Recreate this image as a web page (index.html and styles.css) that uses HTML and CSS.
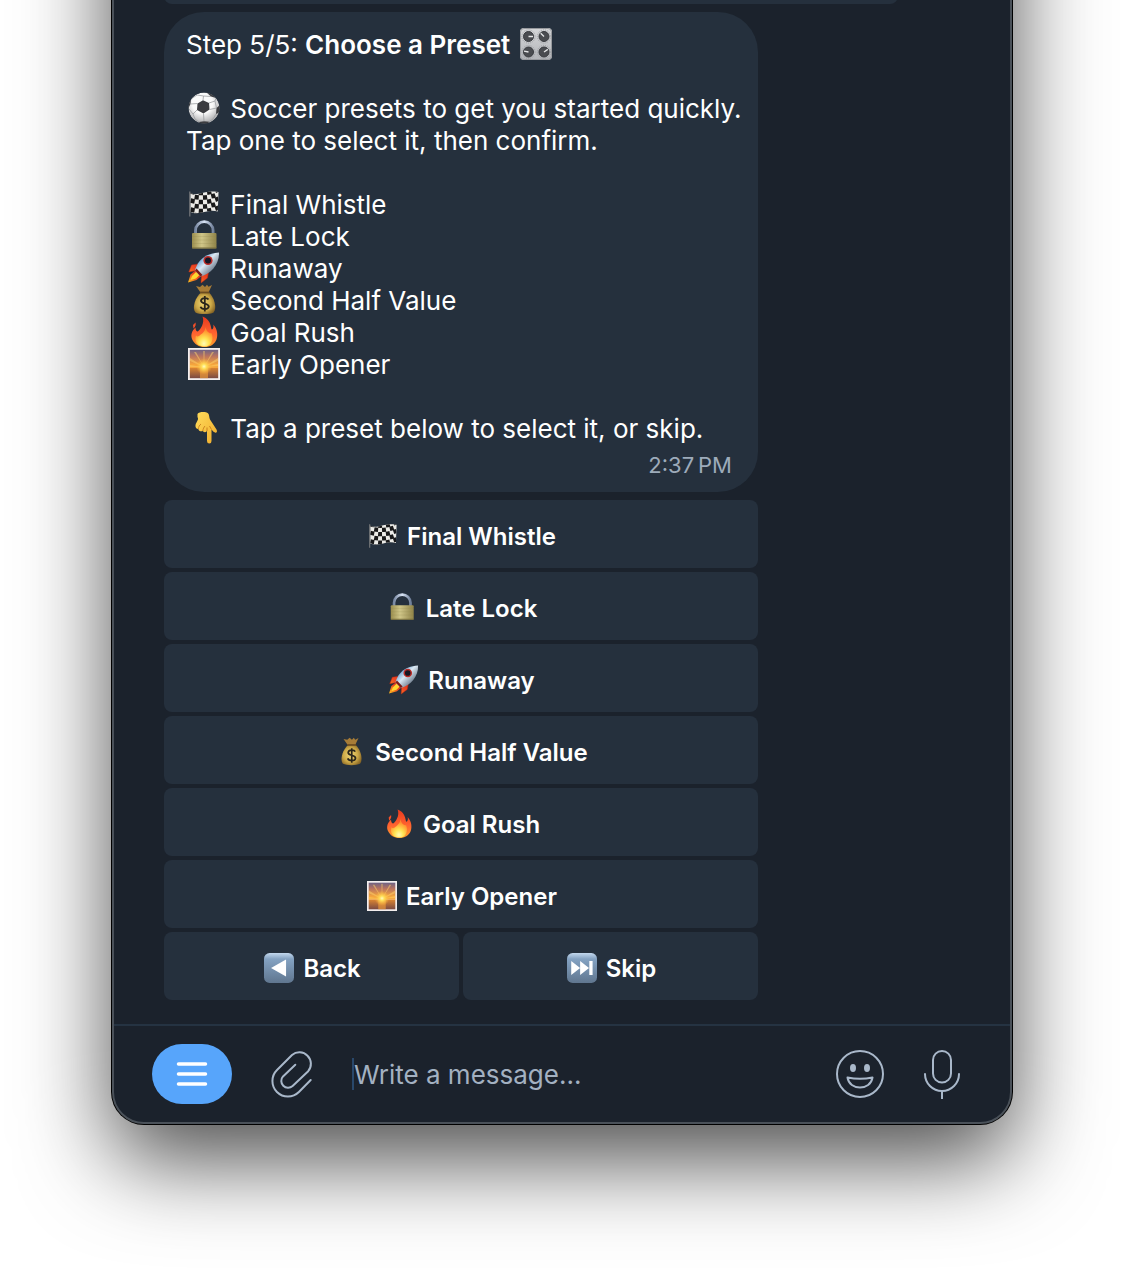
FILE: index.html
```html
<!DOCTYPE html>
<html lang="en">
<head>
    <meta charset="UTF-8">
    <meta name="viewport" content="width=device-width, initial-scale=1.0">
    <title>Choose a Preset</title>
    <link rel="stylesheet" href="styles.css">
</head>
<body>
    <main class="window">
        <div class="chat">
            <div class="previous"></div>

            <article class="bubble">
                <p>Step 5/5: <strong>Choose a Preset</strong> <svg class="emoji"><use href="#knobs"/></svg></p>
                <p><svg class="emoji"><use href="#soccer"/></svg> Soccer presets to get you started quickly.<br>Tap one to select it, then confirm.</p>
                <ul class="presets">
                    <li><svg class="emoji"><use href="#flag"/></svg> Final Whistle</li>
                    <li><svg class="emoji"><use href="#lock"/></svg> Late Lock</li>
                    <li><svg class="emoji"><use href="#rocket"/></svg> Runaway</li>
                    <li><svg class="emoji"><use href="#money"/></svg> Second Half Value</li>
                    <li><svg class="emoji"><use href="#fire"/></svg> Goal Rush</li>
                    <li><svg class="emoji"><use href="#sunrise"/></svg> Early Opener</li>
                </ul>
                <p><svg class="emoji"><use href="#point"/></svg> Tap a preset below to select it, or skip.</p>
                <time class="time">2:37&#8239;PM</time>
            </article>

            <div class="keyboard">
                <button type="button" class="key wide"><svg class="emoji"><use href="#flag"/></svg>Final Whistle</button>
                <button type="button" class="key wide"><svg class="emoji"><use href="#lock"/></svg>Late Lock</button>
                <button type="button" class="key wide"><svg class="emoji"><use href="#rocket"/></svg>Runaway</button>
                <button type="button" class="key wide"><svg class="emoji"><use href="#money"/></svg>Second Half Value</button>
                <button type="button" class="key wide"><svg class="emoji"><use href="#fire"/></svg>Goal Rush</button>
                <button type="button" class="key wide"><svg class="emoji"><use href="#sunrise"/></svg>Early Opener</button>
                <button type="button" class="key"><svg class="emoji"><use href="#back"/></svg>Back</button>
                <button type="button" class="key"><svg class="emoji"><use href="#skip"/></svg>Skip</button>
            </div>
        </div>

        <form class="composer">
            <button type="button" class="menu" aria-label="Menu">
                <svg width="32" height="24" viewBox="0 0 32 24"><path d="M2.500 2h27M2.500 12h27M2.500 22h27" stroke="#fff" stroke-width="3.500" stroke-linecap="round"/></svg>
            </button>
            <button type="button" class="tool" aria-label="Attach file">
                <svg width="48" height="50" viewBox="0 -1 48 50"><path d="M42.700 30 30.900 42A15.500 15.500 0 0 1 9 20L24 5A11.500 11.500 0 0 1 40.200 21.200L24.600 36A6.800 6.800 0 0 1 15 26.400L27.300 14.800"/></svg>
            </button>
            <input type="text" class="message" placeholder="Write a message..." aria-label="Message">
            <button type="button" class="tool" aria-label="Emoji">
                <svg width="48" height="50" viewBox="0 -1 48 50">
                    <circle cx="24" cy="24" r="23"/>
                    <path d="M11.500 27.500Q24 30 36.500 27.500C35.500 34 30 37.500 24 37.500S12.500 34 11.500 27.500Z"/>
                    <g class="eyes"><ellipse cx="17" cy="18" rx="3" ry="4"/><ellipse cx="31" cy="18" rx="3" ry="4"/></g>
                </svg>
            </button>
            <button type="button" class="tool mic" aria-label="Record voice message">
                <svg width="48" height="50" viewBox="0 -1 48 50">
                    <rect x="15" y="1" width="18" height="31.500" rx="9"/>
                    <path d="M7 24a17 17 0 0 0 34 0M24 41v8"/>
                </svg>
            </button>
        </form>
    </main>

    <!-- emoji set -->
    <svg class="sprite" width="0" height="0" aria-hidden="true">
        <defs>
            <radialGradient id="ball-fill" cx=".45" cy=".35" r=".65"><stop offset=".5" stop-color="#fafafa"/><stop offset="1" stop-color="#a9a9ab"/></radialGradient>
            <linearGradient id="panel-fill" x2="0" y2="1"><stop stop-color="#d5d6d8"/><stop offset="1" stop-color="#b2b4b8"/></linearGradient>
            <linearGradient id="brass" x2="1"><stop stop-color="#9b8e4e"/><stop offset=".4" stop-color="#d0c688"/><stop offset="1" stop-color="#8f8348"/></linearGradient>
            <linearGradient id="steel" x2="1"><stop stop-color="#7888a3"/><stop offset=".5" stop-color="#d9e4f5"/><stop offset="1" stop-color="#71819b"/></linearGradient>
            <linearGradient id="hull" x2="1" y2="1"><stop offset=".15" stop-color="#3d87c8"/><stop offset=".45" stop-color="#dbe8f3"/><stop offset=".8" stop-color="#5f6d7e"/></linearGradient>
            <linearGradient id="jet" x1="1" x2="0" y2="1"><stop stop-color="#d31f10"/><stop offset=".5" stop-color="#ef4b23"/><stop offset="1" stop-color="#ffc21c"/></linearGradient>
            <radialGradient id="sack" cx=".45" cy=".5" r=".6"><stop stop-color="#f0d778"/><stop offset=".6" stop-color="#cda947"/><stop offset="1" stop-color="#876525"/></radialGradient>
            <linearGradient id="flame" x2="0" y2="1"><stop stop-color="#e8391d"/><stop offset=".55" stop-color="#ff6230"/><stop offset="1" stop-color="#ffa12b"/></linearGradient>
            <radialGradient id="flame-core" cx=".5" cy=".85" r=".7"><stop stop-color="#fffbb4"/><stop offset=".4" stop-color="#ffe453"/><stop offset="1" stop-color="#ff8a2b"/></radialGradient>
            <linearGradient id="sky" x2="0" y2="1"><stop stop-color="#6d6285"/><stop offset=".35" stop-color="#b9735f"/><stop offset=".8" stop-color="#f5a53c"/></linearGradient>
            <linearGradient id="sea" x2="0" y2="1"><stop stop-color="#d98432"/><stop offset="1" stop-color="#7b4a42"/></linearGradient>
            <radialGradient id="sun-glow"><stop stop-color="#fffbc0"/><stop offset=".3" stop-color="#ffe05a"/><stop offset="1" stop-color="#ffb43c" stop-opacity="0"/></radialGradient>
            <linearGradient id="skin" x2="1" y2="1"><stop stop-color="#ffdc5c"/><stop offset="1" stop-color="#f0ac2b"/></linearGradient>
            <linearGradient id="tile" x2="0" y2="1"><stop stop-color="#c3d8ee"/><stop offset=".2" stop-color="#84a2c2"/><stop offset="1" stop-color="#60768f"/></linearGradient>
        </defs>

        <symbol id="soccer" viewBox="0 0 32 32">
            <clipPath id="ball-clip"><circle cx="16" cy="16" r="15.500"/></clipPath>
            <g clip-path="url(#ball-clip)">
                <circle cx="16" cy="16" r="15.500" fill="url(#ball-fill)"/>
                <path d="M9.500 11.500 15 8.200 21 11 21.500 17.500 15.500 21.500 9 18Z" fill="#3b3c40"/>
                <path d="M18 0 24 1 28 6 23 4.500ZM0 12 3 7 2.500 12 0 17ZM32 13 28.500 16 28 22 32 20ZM11 30 16 29.200 21 29.800 20 32H12Z" fill="#3b3c40"/>
                <path d="M15 8.200 15.500 4 23 4.500M15.500 4 9 3 3 7M9.500 11.500 2.500 12M9 18 5 22 1 17M5 22 7 27 11 30M15.500 21.500 16 29.200M21.500 17.500 28.500 16M21 11 27 9 28 6M27 9 28.500 16M28 22 25 27 21 29.800" fill="none" stroke="#9c9ea1" stroke-width=".8"/>
            </g>
        </symbol>
        <symbol id="knobs" viewBox="0 0 32 32">
            <rect width="32" height="32" rx="4" fill="url(#panel-fill)"/>
            <rect x=".5" y=".5" width="31" height="31" rx="3.500" fill="none" stroke="#97999d"/>
            <g fill="none" stroke="#96989c" stroke-dasharray=".8 1.200"><circle cx="8.500" cy="8.500" r="6.600"/><circle cx="24" cy="8.500" r="6.600"/><circle cx="8.500" cy="24" r="6.600"/><circle cx="24" cy="24" r="6.600"/></g>
            <g fill="#4a4c50" stroke="#3a3c40"><circle cx="8.500" cy="8.500" r="5"/><circle cx="24" cy="8.500" r="5"/><circle cx="8.500" cy="24" r="5"/><circle cx="24" cy="24" r="5"/></g>
            <path d="M8.500 8.500h4.500M24 8.500l-3.300-3.300M8.500 24l-4.500-.8M24 24l3.800-2.600" stroke="#e6e7e8" stroke-width="1.300"/>
        </symbol>
        <symbol id="flag" viewBox="0 0 32 32">
            <path d="M1.800 3.500v25" stroke="#77797b" stroke-width="1.200"/>
            <clipPath id="flag-clip"><path d="M2.500 5C10 9 17 1.500 30.500 4L29.800 23.500C19 20.500 12 28 2.500 24Z"/></clipPath>
            <g clip-path="url(#flag-clip)">
                <path d="M2 3h29v23H2z" fill="#ecebe7"/>
                <path d="M2.500 3.500q14 4 28-2M2.500 12.500q14 4 28-2M2.500 21.500q14 4 28-2" fill="none" stroke="#19191a" stroke-width="4.500" stroke-dasharray="4.200 4.200"/>
                <path d="M2.500 8q14 4 28-2M2.500 17q14 4 28-2M2.500 26q14 4 28-2" fill="none" stroke="#19191a" stroke-width="4.500" stroke-dasharray="4.200 4.200" stroke-dashoffset="4.200"/>
            </g>
        </symbol>
        <symbol id="lock" viewBox="0 0 32 32">
            <path d="M7.500 15V10.500a8.800 8.800 0 0 1 17.600 0V15" fill="none" stroke="url(#steel)" stroke-width="2.800"/>
            <rect x="4" y="13" width="24.500" height="15.500" rx="1" fill="url(#brass)"/>
            <path d="M4 16.500h24.500M4 20h24.500M4 23.500h24.500" stroke="#8d824c" stroke-opacity=".2"/>
            <path d="M4 28h24.500" stroke="#756b3b"/>
        </symbol>
        <symbol id="rocket" viewBox="0 0 32 32">
            <path d="M10.500 12 3.500 13 .8 20 9 18.500ZM20.500 20.500 19.500 26 13 31 13.500 22Z" fill="url(#jet)" stroke="#bd2015" stroke-width=".5"/>
            <path d="M8 18 2.500 22.500 0 30.500 8.500 28 14 23.500Z" fill="url(#jet)"/>
            <path d="M8 20 4 24 2.500 28 8 26.500 12 22.500Z" fill="#ffd62f"/>
            <path d="M7 18.500C9 10.500 15 1.500 31 .5 31.500 12 23 22 12.500 24.500Z" fill="url(#hull)"/>
            <path d="M7 18.500 12.500 24.500 14.500 23 8.500 16.500Z" fill="#7e1d16"/>
            <circle cx="20" cy="8.500" r="4.600" fill="#ba2a26"/><circle cx="20" cy="8.500" r="3" fill="#151724"/>
        </symbol>
        <symbol id="money" viewBox="0 0 32 32">
            <path d="M12.500 8.500 8 2 12 3 14.500 .8 17 3 19 .8 20.500 2.800 24 1 20.500 8.500Z" fill="#a77c37"/>
            <path d="M13 8.500H21C26 13 29.500 24 25.500 28.500 22 30.500 11 30.500 7.500 28.500 3.500 24 7.500 13 13 8.500Z" fill="url(#sack)"/>
            <path d="M12 8.500h9.500" stroke="#6b4b1f" stroke-width="1.800"/>
            <path d="M20.500 15.500C19.500 13.500 13.500 13.300 13 16.500 12.800 20.500 21 18.500 20.800 22.700 20.300 26 13.500 25.700 12.500 22.800M16.800 12v15.500" fill="none" stroke="#2a251b" stroke-width="1.800"/>
        </symbol>
        <symbol id="fire" viewBox="0 0 32 32">
            <path d="M14.500 .5C24 4 22.500 13 24 13.500 25.500 13 25.800 10.500 25.200 8.500 29.500 13 30 19 28.500 23.500 26.500 28.500 22 31 16.500 31S6.500 28.500 4 23C2.500 18.500 4 14.500 7.500 11.500 7.500 14 8.500 15.500 9.800 15.500 12.500 13.500 17 7 14.500.5ZM5 9 7.500 6.500Q8.500 9.500 5.500 12.500Z" fill="url(#flame)"/>
            <path d="M17.500 11C18.500 16 22 18 23.500 17 26 22.500 24 30.500 16.500 30.500S6 25 8 19.500C9 21 11 20.500 11.500 19.500 14 18 17.500 15 17.500 11Z" fill="url(#flame-core)"/>
        </symbol>
        <symbol id="sunrise" viewBox="0 0 32 32">
            <path d="M0 0h32v32H0z" fill="#f3eeee"/>
            <path d="M1.800 1.800h28.400V20H1.800z" fill="url(#sky)"/>
            <path d="M16 19 2 13v-3ZM16 19 6 4h2ZM16 19 15.200 3h1.600ZM16 19 24 4h2ZM16 19 30 10v3ZM16 19 2 17v2ZM16 19 30 16v2Z" fill="#ffd36a" opacity=".5"/>
            <path d="M1.800 20h28.400v10.200H1.800z" fill="url(#sea)"/>
            <path d="M12 20h8v10.200h-8z" fill="#f6a23a" opacity=".6"/>
            <circle cx="16" cy="18.500" r="8" fill="url(#sun-glow)"/>
        </symbol>
        <symbol id="point" viewBox="-3 0 32 32">
            <path d="M6.500 2C8-.5 15-.5 17 1.200 18.500 2.500 18 5.500 19 7.500L25.500 17.500C27 20.500 24.500 21.500 22.500 19.800L20.500 17.500V29Q20.500 31.500 18.300 31.500T16 29V19C14.500 20.800 12.500 20.300 11.800 19 9.500 20 7.800 18.800 7.300 17 4 16.500 3.800 13 5.500 10.500 7 8 7.500 7 6.500 5Z" fill="url(#skin)"/>
            <path d="M7.300 17C7.500 15 8.500 13 10 12M11.800 19C12 17 13 15 14 14M16 19V15.500M20.500 17.500 18.500 14" fill="none" stroke="#c77d1b" stroke-width=".9"/>
        </symbol>
        <symbol id="back" viewBox="0 0 32 32">
            <rect width="32" height="32" rx="6" fill="url(#tile)"/>
            <path d="M7.500 16 23.500 7v18Z" fill="#fff"/>
        </symbol>
        <symbol id="skip" viewBox="0 0 32 32">
            <rect width="32" height="32" rx="6" fill="url(#tile)"/>
            <path d="M4.500 8.500 14 16 4.500 23.500ZM14 8.500 23.500 16 14 23.500ZM23.800 8.500h3.500v15h-3.500z" fill="#fff"/>
        </symbol>
    </svg>
</body>
</html>
```

FILE: styles.css
```css
* {
    box-sizing: border-box;
}
body {
    margin: 0;
    padding: 0 112px 148px;
    overflow: hidden;
    background: #fff;
    color: #fff;
    font-family: Inter, "Noto Sans", sans-serif;
}
button, input {
    font: inherit;
    color: inherit;
    border: none;
    padding: 0;
    background: none;
}
button {
    cursor: pointer;
}

/* the top of the window is scrolled out of view */
.window {
    margin-top: -160px;
    background: #1b222c;
    border: 2px solid #4a5159;
    border-radius: 32px;
    box-shadow: 0 0 0 1px #000, 0 36px 90px rgba(0, 0, 0, 0.7);
}
.chat {
    padding: 94px 50px 24px;
    display: flex;
    flex-direction: column;
    align-items: flex-start;
    gap: 8px;
}
.previous {
    width: calc(100% - 62px);
    height: 68px;
    border-radius: 8px;
    background: #25303d;
}
.bubble {
    width: 594px;
    max-width: 100%;
    padding: 17px 12px 11px 22px;
    border-radius: 40px;
    background: #25303d;
    font-size: 26px;
    line-height: 32px;
}
.bubble p {
    margin: 0 0 32px;
}
.bubble strong {
    font-weight: 600;
}
.bubble p:last-of-type {
    margin-bottom: 4px;
}
.presets {
    list-style: none;
    margin: 0 0 32px;
    padding: 0;
}
.emoji {
    width: 32px;
    height: 32px;
    margin: -1px 3px 0 2px;
    vertical-align: top;
}
.time {
    display: block;
    padding-right: 14px;
    text-align: right;
    font-size: 22px;
    color: #9dabba;
}

.keyboard {
    width: 594px;
    max-width: 100%;
    display: grid;
    grid-template-columns: 1fr 1fr;
    gap: 4px;
}
.key {
    height: 68px;
    display: flex;
    align-items: center;
    justify-content: center;
    gap: 9px;
    padding: 4px 0 0 2px;
    border-radius: 8px;
    background: #25303d;
    font-size: 24px;
    font-weight: 600;
}
.key .emoji {
    width: 30px;
    height: 30px;
    margin: 0;
}
.wide {
    grid-column: span 2;
}

.composer {
    display: flex;
    align-items: center;
    gap: 36px;
    height: 98px;
    padding: 0 44px 0 38px;
    border-top: 2px solid #253342;
}
.menu {
    width: 80px;
    height: 60px;
    display: flex;
    align-items: center;
    justify-content: center;
    border-radius: 30px;
    background: #57a5fb;
}
.tool {
    flex: none;
    height: 50px;
    fill: none;
    stroke: #a9b8ca;
    stroke-width: 2;
    stroke-linecap: round;
    stroke-linejoin: round;
}
.tool svg {
    display: block;
}
.mic {
    margin-left: -2px;
}
.eyes {
    fill: #a9b8ca;
    stroke: none;
}
.message {
    flex: 1;
    min-width: 0;
    height: 32px;
    border-left: 2px solid #29486b;
    font-size: 26px;
    outline: none;
}
.message::placeholder {
    color: #a3b1c1;
    opacity: 1;
}

@media (max-width: 800px) {
    body {
        padding-left: 16px;
        padding-right: 16px;
    }
    .chat {
        padding-left: 16px;
        padding-right: 16px;
    }
    .composer {
        gap: 16px;
        padding: 0 16px;
    }
}
```
